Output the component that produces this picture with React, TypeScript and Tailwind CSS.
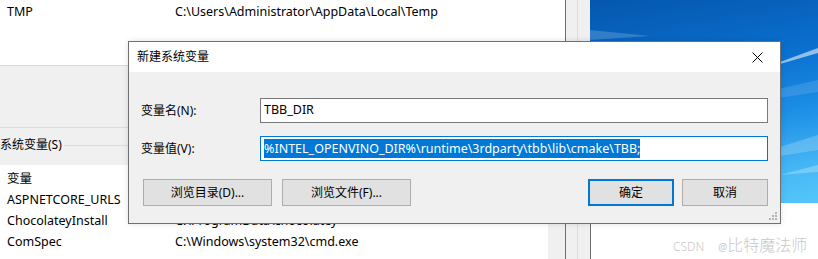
import React from 'react';

const font = "font-['Noto_Sans','Noto_Sans_CJK_SC',sans-serif]";

function ListRow({ name, value }: { name: string; value?: string }) {
  return (
    <div className="flex items-center h-[21px] text-[12.5px] text-black whitespace-nowrap">
      <span className="w-[175px] pl-[7px]">{name}</span>
      {value && <span>{value}</span>}
    </div>
  );
}

function WinButton({ label, width, primary }: { label: string; width: string; primary?: boolean }) {
  return (
    <div
      className={`${width} h-[27px] flex items-center justify-center text-[12px] text-black bg-[#e1e1e1] ${
        primary ? 'border-2 border-[#0078d7]' : 'border border-[#adadad]'
      }`}
    >
      {label}
    </div>
  );
}

export default function App() {
  return (
    <div className={`relative w-[818px] h-[259px] overflow-hidden bg-white ${font}`}>
      {/* background: environment variables window */}
      <div className="flex h-full">
        <div className="w-[565px] h-full flex flex-col">
          {/* user variables list */}
          <div className="h-[66px] bg-white border-b border-[#dadada] pt-[2px]">
            <ListRow name="TMP" value="C:\Users\Administrator\AppData\Local\Temp" />
          </div>
          {/* grey gap with system group label */}
          <div className="h-[99px] bg-[#f0f0f0] flex flex-col">
            <div className="h-[62px] border-b border-[#dcdcdc]" />
            <div className="mt-[8px] flex items-center">
              <span className="text-[12px] text-black whitespace-nowrap">系统变量(S)</span>
              <div className="flex-1 h-px bg-[#dcdcdc] ml-[2px]" />
            </div>
          </div>
          {/* system variables list */}
          <div className="flex-1 flex bg-white">
            <div className="w-[548px] pt-[4px]">
              <ListRow name="变量" />
              <ListRow name="ASPNETCORE_URLS" />
              <ListRow name="ChocolateyInstall" value="C:\ProgramData\chocolatey" />
              <ListRow name="ComSpec" value="C:\Windows\system32\cmd.exe" />
            </div>
            <div className="w-[17px] bg-[#f0f0f0]" />
          </div>
        </div>
        {/* window frame */}
        <div className="w-[25px] h-full border-l border-[#6e6e6e] bg-[#f0f0f0] flex">
          <div className="w-[12px] h-full border-r border-[#dedede]" />
        </div>
        {/* desktop */}
        <div className="flex-1 flex flex-col">
          <div className="h-[203px] relative overflow-hidden bg-[linear-gradient(170deg,#0557ad_0%,#0a6fcf_35%,#1c8ee6_60%,#47b8f5_85%,#55c6fb_100%)]">
            <svg className="absolute inset-0" width="228" height="203" viewBox="0 0 228 203">
              <polygon points="0,30 60,36 0,40" fill="#ffffff" opacity="0.18" />
              <polygon points="190,62 228,48 228,53 190,64" fill="#ffffff" opacity="0.55" />
              <polygon points="140,100 228,80 228,92 150,104" fill="#ffffff" opacity="0.12" />
              <polygon points="180,150 228,135 228,150 190,156" fill="#ffffff" opacity="0.2" />
              <polygon points="190,175 228,165 228,172" fill="#ffffff" opacity="0.25" />
            </svg>
          </div>
          <div className="flex-1 bg-white border-l border-[#6e6e6e]" />
        </div>
      </div>

      {/* dialog window */}
      <div className="absolute left-[128px] top-[41px] w-[653px] h-[183px] border border-[#6f6f6f] flex flex-col shadow-[0_0_6px_rgba(0,0,0,0.12)]">
        <div className="h-[30px] bg-white flex items-center justify-between">
          <span className="pl-[8px] text-[12px] text-black">新建系统变量</span>
          <div className="w-[46px] h-full flex items-center justify-center">
            <svg width="11" height="11" viewBox="0 0 11 11">
              <path d="M0.5 0.5 L10.5 10.5 M10.5 0.5 L0.5 10.5" stroke="#000" strokeWidth="1" />
            </svg>
          </div>
        </div>
        <div className="relative flex-1 bg-[#f0f0f0] flex flex-col pt-[26px]">
          <div className="grid grid-cols-[119px_508px] gap-y-[13px] ml-[12px] items-center">
            <span className="text-[12px] text-black">变量名(N):</span>
            <div className="h-[25px] border border-[#7a7a7a] bg-white flex items-center pl-[3px] text-[12.5px] text-black whitespace-nowrap">
              TBB_DIR
            </div>
            <span className="text-[12px] text-black">变量值(V):</span>
            <div className="h-[25px] border border-[#0078d7] bg-white flex items-center pl-[3px] text-[12.5px] whitespace-nowrap">
              <span className="bg-[#0078d7] text-white leading-[19px]">
                %INTEL_OPENVINO_DIR%\runtime\3rdparty\tbb\lib\cmake\TBB;
              </span>
            </div>
          </div>
          <div className="flex justify-between mt-[18px] ml-[14px] mr-[12px]">
            <div className="flex gap-[10px]">
              <WinButton label="浏览目录(D)..." width="w-[129px]" />
              <WinButton label="浏览文件(F)..." width="w-[129px]" />
            </div>
            <div className="flex gap-[8px]">
              <WinButton label="确定" width="w-[86px]" primary />
              <WinButton label="取消" width="w-[86px]" />
            </div>
          </div>
          {/* resize grip */}
          <svg className="absolute right-[2px] bottom-[2px]" width="10" height="10" viewBox="0 0 10 10">
            <rect x="7" y="1" width="2" height="2" fill="#b4b4b4" />
            <rect x="4" y="4" width="2" height="2" fill="#b4b4b4" />
            <rect x="7" y="4" width="2" height="2" fill="#b4b4b4" />
            <rect x="1" y="7" width="2" height="2" fill="#b4b4b4" />
            <rect x="4" y="7" width="2" height="2" fill="#b4b4b4" />
            <rect x="7" y="7" width="2" height="2" fill="#b4b4b4" />
          </svg>
        </div>
      </div>

      {/* watermark */}
      <div className="absolute left-[673px] top-[233px] flex items-baseline text-[#c8c8c8] whitespace-nowrap">
        <span className="text-[12px] font-light">CSDN</span>
        <span className="text-[10px] ml-[14px]">@</span>
        <span className="text-[16px] font-light">比特魔法师</span>
      </div>
    </div>
  );
}
